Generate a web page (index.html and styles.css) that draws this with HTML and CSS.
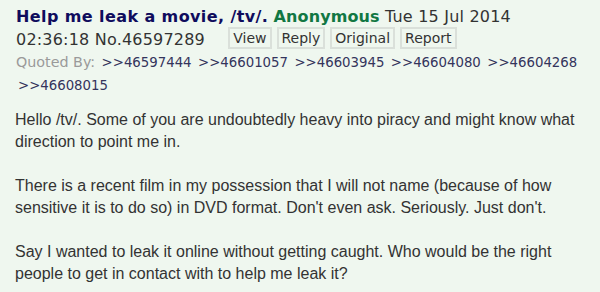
FILE: index.html
```html
<!DOCTYPE html>
<html>
<head>
<meta charset="utf-8">
<link rel="stylesheet" href="styles.css">
</head>
<body>
<div class="post">
  <div class="post-head">
    <span class="subject">Help me leak a movie, /tv/.</span>
    <span class="name">Anonymous</span>
    <span class="date">Tue 15 Jul 2014 02:36:18</span>
    <span class="num">No.46597289</span>
    <span class="actions"><span class="btn">View</span><span class="btn">Reply</span><span class="btn">Original</span><span class="btn">Report</span></span>
  </div>
  <div class="backlinks">
    <span class="label">Quoted By:</span>
    <a class="ql">&gt;&gt;46597444</a>
    <a class="ql">&gt;&gt;46601057</a>
    <a class="ql">&gt;&gt;46603945</a>
    <a class="ql">&gt;&gt;46604080</a>
    <a class="ql">&gt;&gt;46604268</a>
    <a class="ql">&gt;&gt;46608015</a>
  </div>
  <div class="text">Hello /tv/. Some of you are undoubtedly heavy into piracy and might know what direction to point me in.<br><br>There is a recent film in my possession that I will not name (because of how sensitive it is to do so) in DVD format. Don't even ask. Seriously. Just don't.<br><br>Say I wanted to leak it online without getting caught. Who would be the right people to get in contact with to help me leak it?</div>
</div>
</body>
</html>
```
FILE: styles.css
```css
html, body {
  margin: 0;
  padding: 0;
  background: #eff7ef;
}
.post {
  padding: 5px 10px 0 15px;
  color: #333;
}
.post-head {
  font-family: "DejaVu Sans", Verdana, sans-serif;
  font-size: 16px;
  line-height: 23px;
  letter-spacing: 0.2px;
  padding-left: 1px;
  padding-right: 10px;
}
.subject {
  color: #0f0c5d;
  font-weight: bold;
  letter-spacing: 0.4px;
}
.name {
  color: #117743;
  font-weight: bold;
  letter-spacing: 0.1px;
}
.date, .num {
  color: #333;
}
.actions {
  margin-left: 18px;
  white-space: nowrap;
  display: inline-flex;
  gap: 5px;
  vertical-align: top;
  margin-top: -1px;
}
.btn {
  display: inline-block;
  font-size: 14px;
  line-height: 18px;
  letter-spacing: 0;
  padding: 0 3px;
  border: 2px solid #dae0da;
  color: #333;
}
.backlinks {
  font-family: "DejaVu Sans", Verdana, sans-serif;
  font-size: 14px;
  line-height: 22px;
  padding-left: 1px;
}
.label {
  color: #9a9a9a;
  font-size: 14.3px;
}
.ql {
  color: #34345c;
  font-size: 13.3px;
  margin-left: 2px;
}
.text {
  font-family: "Liberation Sans", Arial, sans-serif;
  font-size: 16px;
  line-height: 22px;
  color: #333;
  margin-top: 12px;
}
```
